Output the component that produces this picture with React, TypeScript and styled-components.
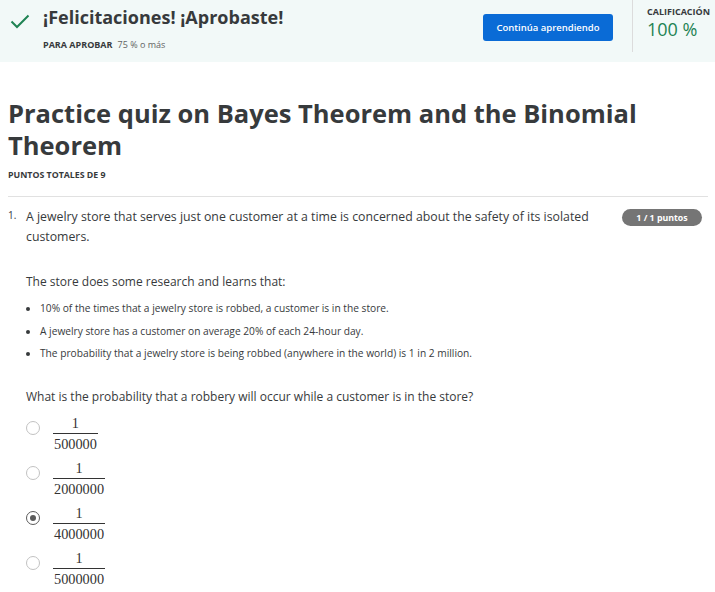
import styled, { createGlobalStyle } from "styled-components";

const GlobalStyle = createGlobalStyle`
  body {
    margin: 0;
    font-family: "Open Sans", "Noto Sans", sans-serif;
    color: #373a3c;
    background: #ffffff;
  }
`;

// Green banner at the top with the result
const Banner = styled.div`
  height: 62px;
  background-color: #f2f9f8;
  display: flex;
  align-items: flex-start;
  padding-left: 10px;
  box-sizing: border-box;
`;

const CheckMark = styled.div`
  flex-shrink: 0;
  width: 33px;
  padding-top: 12px;
`;

const BannerText = styled.div`
  flex: 1;
  padding-top: 3px;
`;

const BannerTitle = styled.div`
  font-size: 18px;
  font-weight: 700;
  line-height: 28px;
  color: #373a3c;
`;

const PassLine = styled.div`
  margin-top: 7px;
  font-size: 9px;
  color: #636363;
  span {
    font-weight: 700;
    color: #373a3c;
    margin-right: 5px;
  }
`;

const PrimaryButton = styled.button`
  margin-top: 14px;
  width: 130px;
  height: 27px;
  border: none;
  border-radius: 3px;
  background-color: #0a6bd6;
  color: #ffffff;
  font-family: "Open Sans", sans-serif;
  font-size: 9.5px;
  font-weight: 600;
`;

const GradeBox = styled.div`
  margin-left: 19px;
  height: 52px;
  border-left: 1px solid #dcdcdc;
  padding: 7px 0 0 14px;
  box-sizing: border-box;
  width: 83px;
`;

const GradeLabel = styled.div`
  font-size: 9px;
  font-weight: 700;
  line-height: 10px;
`;

const GradeValue = styled.div`
  font-size: 18px;
  line-height: 24px;
  color: #1f8354;
`;

// The quiz body
const Body = styled.div`
  padding: 0 7px 0 8px;
`;

const QuizTitle = styled.h1`
  margin: 35px 0 0;
  font-size: 25.5px;
  line-height: 32px;
  font-weight: 700;
  color: #373a3c;
`;

const TotalPoints = styled.div`
  margin-top: 9px;
  font-size: 8.8px;
  font-weight: 700;
  line-height: 10px;
`;

const Rule = styled.hr`
  margin: 16px 0 0;
  border: none;
  border-top: 1px solid #e1e1e1;
`;

const Question = styled.div`
  display: flex;
  margin-top: 10px;
`;

const Number = styled.div`
  width: 18px;
  font-size: 10px;
  line-height: 16px;
`;

const QuestionBody = styled.div`
  flex: 1;
  font-size: 12px;
  line-height: 20px;
`;

const PromptRow = styled.div`
  display: flex;
  justify-content: space-between;
  align-items: flex-start;
`;

const Prompt = styled.p`
  margin: 0;
  width: 590px;
  font-size: 12.3px;
`;

const PointsBadge = styled.div`
  flex-shrink: 0;
  margin-top: 2px;
  margin-right: 6px;
  height: 17px;
  width: 80px;
  border-radius: 9px;
  background-color: #757575;
  color: #ffffff;
  font-size: 8.8px;
  font-weight: 700;
  display: flex;
  align-items: center;
  justify-content: center;
`;

const Paragraph = styled.p<{ $top: number }>`
  margin: ${(p) => p.$top}px 0 0;
`;

const Facts = styled.ul`
  margin: 5px 0 0;
  padding-left: 14px;
  font-size: 10.2px;
  line-height: 22.5px;
`;

const Options = styled.div`
  margin-top: 4px;
  display: flex;
  flex-direction: column;
`;

const Option = styled.label`
  display: flex;
  align-items: center;
  gap: 13px;
  height: 45px;
`;

const Radio = styled.span<{ $checked?: boolean }>`
  flex-shrink: 0;
  width: 12px;
  height: 12px;
  border-radius: 50%;
  border: 1px solid ${(p) => (p.$checked ? "#5b5b5b" : "#c2c2c2")};
  display: flex;
  align-items: center;
  justify-content: center;
  margin-top: -10px;
  &::after {
    content: "";
    width: 6px;
    height: 6px;
    border-radius: 50%;
    background: ${(p) => (p.$checked ? "#5b5b5b" : "transparent")};
  }
`;

const Fraction = styled.span`
  display: inline-flex;
  flex-direction: column;
  align-items: center;
  font-family: "Liberation Serif", "DejaVu Serif", serif;
  font-size: 14.3px;
  line-height: 16px;
  color: #333333;
`;

const Numerator = styled.span`
  padding: 1px 1px 2px;
`;

const Denominator = styled.span`
  border-top: 1px solid #333333;
  padding: 2px 1px 0;
  align-self: stretch;
  text-align: center;
`;

const answers = [
  { den: "500000", checked: false },
  { den: "2000000", checked: false },
  { den: "4000000", checked: true },
  { den: "5000000", checked: false },
];

const facts = [
  "10% of the times that a jewelry store is robbed, a customer is in the store.",
  "A jewelry store has a customer on average 20% of each 24-hour day.",
  "The probability that a jewelry store is being robbed (anywhere in the world) is 1 in 2 million.",
];

const App = () => {
  return (
    <>
      <GlobalStyle />
      <Banner>
        <CheckMark>
          <svg width="20" height="15" viewBox="0 0 20 15">
            <path d="M1.5 7.5 L7 13 L18.5 1.5" fill="none" stroke="#1f8354" strokeWidth="2" />
          </svg>
        </CheckMark>
        <BannerText>
          <BannerTitle>¡Felicitaciones! ¡Aprobaste!</BannerTitle>
          <PassLine>
            <span>PARA APROBAR</span>75 % o más
          </PassLine>
        </BannerText>
        <PrimaryButton>Continúa aprendiendo</PrimaryButton>
        <GradeBox>
          <GradeLabel>CALIFICACIÓN</GradeLabel>
          <GradeValue>100 %</GradeValue>
        </GradeBox>
      </Banner>
      <Body>
        <QuizTitle>Practice quiz on Bayes Theorem and the Binomial Theorem</QuizTitle>
        <TotalPoints>PUNTOS TOTALES DE 9</TotalPoints>
        <Rule />
        <Question>
          <Number>1.</Number>
          <QuestionBody>
            <PromptRow>
              <Prompt>
                A jewelry store that serves just one customer at a time is concerned about the safety of its isolated customers.
              </Prompt>
              <PointsBadge>1 / 1 puntos</PointsBadge>
            </PromptRow>
            <Paragraph $top={25}>The store does some research and learns that:</Paragraph>
            <Facts>
              {facts.map((f) => (
                <li key={f}>{f}</li>
              ))}
            </Facts>
            <Paragraph $top={22}>What is the probability that a robbery will occur while a customer is in the store?</Paragraph>
            <Options>
              {answers.map((a) => (
                <Option key={a.den}>
                  <Radio $checked={a.checked} />
                  <Fraction>
                    <Numerator>1</Numerator>
                    <Denominator>{a.den}</Denominator>
                  </Fraction>
                </Option>
              ))}
            </Options>
          </QuestionBody>
        </Question>
      </Body>
    </>
  );
};

export default App;
